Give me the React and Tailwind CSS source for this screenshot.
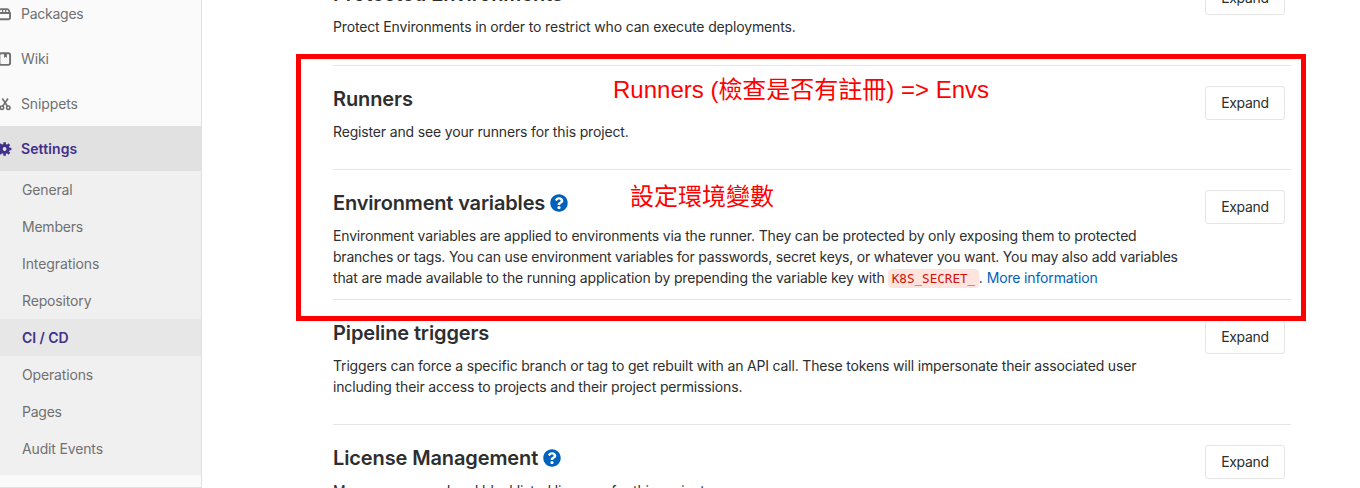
import { FaQuestionCircle } from "react-icons/fa";

function PackageIcon() {
  return (
    <svg className="block size-4" viewBox="0 0 16 16" fill="none" stroke="currentColor" strokeLinejoin="round">
      <path d="M2 7h12v4.700a1.500 1.500 0 0 1-1.500 1.500h-9A1.500 1.500 0 0 1 2 11.700z" strokeWidth="1.900" />
      <path d="M2.200 7 3.300 4.200A1.500 1.500 0 0 1 4.700 3.200h6.600a1.500 1.500 0 0 1 1.400 1L13.800 7" strokeWidth="1.800" />
      <path d="M6.600 3v4M9.600 3v4" strokeWidth="1.300" />
    </svg>
  );
}

function WikiIcon() {
  return (
    <svg className="block size-4" viewBox="0 0 16 16">
      <rect x="3.400" y="2.200" width="10.700" height="11.700" rx="1.800" fill="none" stroke="currentColor" strokeWidth="1.900" />
      <path d="M8 2h2.900v4.900L9.450 5.800 8 6.900z" fill="currentColor" />
    </svg>
  );
}

function SnippetsIcon() {
  return (
    <svg className="block size-4" viewBox="0 0 16 16" fill="none" stroke="currentColor" strokeWidth="1.600">
      <circle cx="5.900" cy="11.700" r="1.700" />
      <circle cx="12.300" cy="11.700" r="1.700" />
      <path d="M6.700 10.200 12 2.500M11.500 10.200 6.300 2.500" />
    </svg>
  );
}

function GearIcon() {
  return (
    <svg className="block size-4" viewBox="0 0 16 16" fill="none" stroke="currentColor">
      <circle cx="8.600" cy="8" r="3.500" strokeWidth="3.200" />
      <path d="M8.600 1.200v2.600M8.600 12.200v2.600M1.800 8h2.600M12.800 8h2.600M3.860 3.260l1.800 1.800M11.540 10.940l1.800 1.800M3.860 12.740l1.800-1.800M11.540 5.060l1.800-1.800" strokeWidth="2.600" />
    </svg>
  );
}

const mainItems = [
  { label: "Packages", Icon: PackageIcon, tracking: "tracking-[-0.25px]" },
  { label: "Wiki", Icon: WikiIcon, tracking: "tracking-[-0.1px]" },
  { label: "Snippets", Icon: SnippetsIcon, tracking: "tracking-[-0.13px]" },
  { label: "Settings", Icon: GearIcon, tracking: "tracking-[0.1px]", active: true },
];

const subItems = [
  { label: "General", tracking: "tracking-[-0.15px]" },
  { label: "Members", tracking: "tracking-[-0.22px]" },
  { label: "Integrations", tracking: "tracking-[-0.1px]" },
  { label: "Repository", tracking: "tracking-[-0.15px]" },
  { label: "CI / CD", tracking: "tracking-[-0.05px]", active: true },
  { label: "Operations", tracking: "tracking-[-0.15px]" },
  { label: "Pages", tracking: "tracking-[-0.25px]" },
  { label: "Audit Events", tracking: "tracking-[-0.15px]" },
];

function Sidebar() {
  return (
    <nav className="-mt-[9px] h-[497px] w-[202px] shrink-0 border-r border-b border-[#dfdfdf] bg-[#fafafa] text-sm text-[#707070]">
      <ul>
        {mainItems.map(({ label, Icon, tracking, active }) => (
          <li
            key={label}
            className={
              active
                ? "flex h-[45px] items-center gap-[9px] bg-[#e1e1e1] font-semibold text-[#41308a]"
                : "flex h-[45px] items-center gap-[9px]"
            }
          >
            <span className="-ml-1 shrink-0">
              <Icon />
            </span>
            <span className={tracking}>{label}</span>
          </li>
        ))}
      </ul>
      <ul className="bg-[#f0f0f0] pb-2">
        {subItems.map(({ label, tracking, active }) => (
          <li
            key={label}
            className={
              active
                ? "flex h-[37px] items-center bg-[#e7e7e7] pl-[22px] font-semibold text-[#41308a]"
                : "flex h-[37px] items-center pl-[22px]"
            }
          >
            <span className={tracking}>{label}</span>
          </li>
        ))}
      </ul>
    </nav>
  );
}

function Section({ title, titleTracking, help, height, children }) {
  return (
    <section className={`${height} flex shrink-0 items-start justify-between border-t border-[#e5e5e5] pt-5 pr-1.5`}>
      <div className="w-[860px]">
        <h4 className="flex h-[26px] items-center gap-[5px] text-xl font-semibold whitespace-nowrap text-[#2e2e2e]">
          <span className={titleTracking}>{title}</span>
          {help && <FaQuestionCircle className="size-[18px] text-[#0062bc]" />}
        </h4>
        <p className="mt-[9px] text-sm leading-[21px] whitespace-nowrap text-[#2e2e2e]">{children}</p>
      </div>
      <button className="h-[34px] w-20 shrink-0 rounded-[3px] border border-[#e5e5e5] bg-white text-sm tracking-[-0.3px] text-[#2e2e2e]">
        Expand
      </button>
    </section>
  );
}

export default function App() {
  return (
    <div className="relative flex h-[488px] w-[1360px] overflow-hidden bg-white font-['Inter',sans-serif]">
      <Sidebar />
      <main className="-mt-10 ml-[131px] flex w-[958px] flex-col">
        <Section title="Protected Environments" titleTracking="tracking-[-0.1px]" height="h-[105px]">
          <span className="tracking-[-0.155px]">Protect Environments in order to restrict who can execute deployments.</span>
        </Section>
        <Section title="Runners" titleTracking="tracking-[-0.1px]" height="h-[104px]">
          <span className="tracking-[-0.155px]">Register and see your runners for this project.</span>
        </Section>
        <Section title="Environment variables" titleTracking="tracking-[-0.16px]" help height="h-[130px]">
          <span className="tracking-[-0.172px]">
            Environment variables are applied to environments via the runner. They can be protected by only exposing them to protected
          </span>
          <br />
          <span className="tracking-[-0.217px]">
            branches or tags. You can use environment variables for passwords, secret keys, or whatever you want. You may also add variables
          </span>
          <br />
          <span className="tracking-[-0.16px]">that are made available to the running application by prepending the variable key with </span>
          <code className="rounded bg-[#fee4df] px-[3.5px] py-0.5 font-['DejaVu_Sans_Mono',monospace] text-[12.6px] text-[#cf1205]">K8S_SECRET_</code>
          <span>. </span>
          <a className="tracking-[-0.15px] text-[#0062bc]">More information</a>
        </Section>
        <Section title="Pipeline triggers" titleTracking="tracking-[-0.12px]" height="h-[125px]">
          <span className="tracking-[-0.172px]">
            Triggers can force a specific branch or tag to get rebuilt with an API call. These tokens will impersonate their associated user
          </span>
          <br />
          <span className="tracking-[-0.15px]">including their access to projects and their project permissions.</span>
        </Section>
        <Section title="License Management" titleTracking="tracking-[-0.12px]" help height="h-[104px]">
          <span className="tracking-[-0.17px]">Manage approved and blacklisted licenses for this project.</span>
        </Section>
      </main>

      <div className="absolute top-[54px] left-[296px] h-[267px] w-[1010px] border-5 border-[#ff0000] font-['Liberation_Sans','Noto_Sans_CJK_TC',sans-serif] text-2xl leading-8 whitespace-nowrap text-[#ff0000]">
        <span className="absolute top-[15px] left-[312px]">Runners (檢查是否有註冊) =&gt; Envs</span>
        <span className="absolute top-[122px] left-[329px]">設定環境變數</span>
      </div>
    </div>
  );
}
